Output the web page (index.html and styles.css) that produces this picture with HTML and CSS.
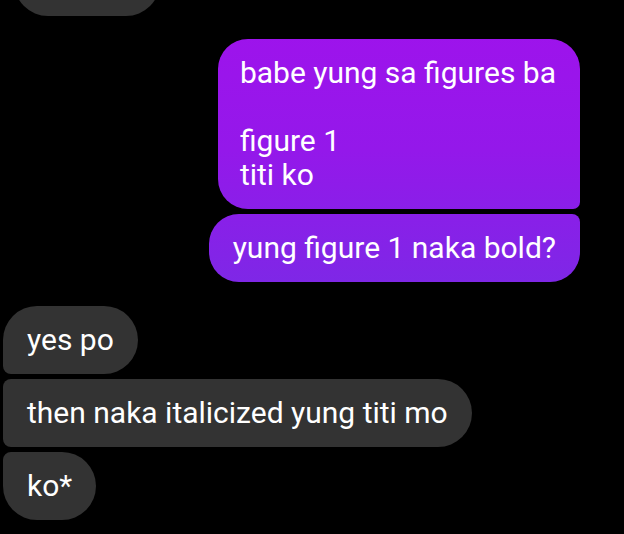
FILE: index.html
```html
<!DOCTYPE html>
<html>
<head>
<meta charset="utf-8">
<link rel="stylesheet" href="styles.css">
</head>
<body>
<div class="chat">
  <div class="bubble them top-cut"></div>
  <div class="group mine">
    <div class="bubble me first">babe yung sa figures ba<br><br>figure 1<br>titi ko</div>
    <div class="bubble me last">yung figure 1 naka bold?</div>
  </div>
  <div class="group theirs">
    <div class="bubble them first">yes po</div>
    <div class="bubble them mid">then naka italicized yung titi mo</div>
    <div class="bubble them last">ko*</div>
  </div>
</div>
</body>
</html>
```
FILE: styles.css
```css
html, body {
  margin: 0;
  padding: 0;
  background: #000;
}
body {
  width: 624px;
  height: 534px;
  overflow: hidden;
  font-family: Roboto, "Noto Sans", sans-serif;
}
.chat {
  display: flex;
  flex-direction: column;
}
.bubble {
  font-size: 30px;
  line-height: 34px;
  color: #fff;
  padding: 17px 24px;
  border-radius: 34px;
  box-sizing: border-box;
  white-space: nowrap;
}
.top-cut {
  width: 146px;
  height: 68px;
  margin-top: -52px;
  margin-left: 14px;
  background: #333333;
}
.group {
  display: flex;
  flex-direction: column;
  gap: 5px;
}
.mine {
  align-items: flex-end;
  margin-top: 23px;
  margin-right: 44px;
}
.theirs {
  align-items: flex-start;
  margin-top: 24px;
  margin-left: 3px;
}
.me {
  background: linear-gradient(180deg, #a012ec 0px, #9418ea 150px, #7d28e6 290px);
  background-attachment: fixed;
}
.me.first {
  padding-left: 22px;
  border-radius: 30px 30px 7px 30px;
}
.me.last {
  border-radius: 30px 8px 30px 30px;
}
.them {
  background: #333333;
}
.them.first {
  border-radius: 34px 34px 34px 8px;
}
.them.mid {
  border-radius: 8px 34px 34px 8px;
}
.them.last {
  border-radius: 8px 34px 34px 34px;
}
```
